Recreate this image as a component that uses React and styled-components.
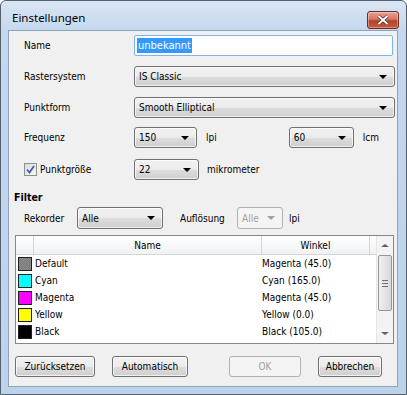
import React from 'react';
import styled, { createGlobalStyle, css } from 'styled-components';

const GlobalStyle = createGlobalStyle`
  html, body {
    margin: 0;
    padding: 0;
    background: #ffffff;
  }
  * {
    box-sizing: border-box;
  }
`;

const Window = styled.div`
  width: 407px;
  height: 395px;
  border: 1px solid #555f6e;
  border-radius: 6px 6px 0 0;
  background: linear-gradient(180deg, #d9e6f4 0px, #c4d8ee 30px, #bcd3eb 100%);
  padding: 0 8px 7px 7px;
  display: flex;
  flex-direction: column;
  font-family: 'DejaVu Sans Condensed', 'Liberation Sans', sans-serif;
  font-size: 10px;
  color: #000;
`;

const TitleBar = styled.div`
  height: 29px;
  display: flex;
  align-items: center;
  justify-content: space-between;
  padding-left: 4px;
`;

const Title = styled.span`
  font-family: 'Noto Sans', 'Open Sans', sans-serif;
  font-size: 11.5px;
  color: #000;
  margin-top: 3px;
`;

const CloseButton = styled.div`
  width: 32px;
  height: 18px;
  margin-top: 9px;
  margin-right: -1px;
  border: 1px solid #6b2b24;
  border-radius: 3px;
  background: linear-gradient(180deg, #e8a393 0%, #d47766 45%, #b8412c 55%, #c85a3f 100%);
  display: flex;
  align-items: center;
  justify-content: center;
  box-shadow: inset 0 0 0 1px rgba(255, 255, 255, 0.35);
`;

const Client = styled.div`
  flex: 1;
  background: #f0f0f0;
  border: 1px solid #8fa3ba;
  display: flex;
  flex-direction: column;
  padding: 4px 4px 0 5px;
`;

const Row = styled.div`
  display: flex;
  align-items: center;
  height: ${(p) => p.$h || 21}px;
  margin-top: ${(p) => p.$mt || 0}px;
  padding-left: ${(p) => (p.$indent ? 10 : 0)}px;
`;

const Label = styled.span`
  width: ${(p) => (p.$w ? `${p.$w}px` : 'auto')};
  flex-shrink: 0;
  margin-left: ${(p) => p.$ml || 0}px;
  white-space: nowrap;
`;

const TextInput = styled.div`
  width: 261px;
  height: 21px;
  border: 1px solid #7eb4ea;
  border-radius: 2px;
  background: #fff;
  display: flex;
  align-items: center;
  padding-left: 2px;
`;

const Selected = styled.span`
  background: #3399ff;
  color: #fff;
  line-height: 15px;
  padding: 0 1px;
  font-size: 11px;
`;

const ComboBox = styled.div`
  position: relative;
  width: ${(p) => p.$w}px;
  height: ${(p) => p.$h || 21}px;
  margin-left: ${(p) => p.$ml || 0}px;
  flex-shrink: 0;
  border: 1px solid #707070;
  border-radius: 3px;
  display: flex;
  align-items: center;
  padding-left: 4px;
  background: linear-gradient(180deg, #f2f2f2 0%, #ebebeb 50%, #dddddd 51%, #cfcfcf 100%);
  box-shadow: inset 0 0 0 1px rgba(255, 255, 255, 0.7);
  ${(p) =>
    p.$disabled &&
    css`
      border-color: #adb2b5;
      background: #f4f4f4;
      box-shadow: none;
      color: #a0a0a0;
    `}
`;

const Arrow = styled.span`
  position: absolute;
  right: 7px;
  top: 50%;
  margin-top: -2px;
  width: 0;
  height: 0;
  border-left: 4px solid transparent;
  border-right: 4px solid transparent;
  border-top: 4px solid ${(p) => (p.$disabled ? '#a0a0a0' : '#000')};
`;

const Unit = styled.span`
  margin-left: ${(p) => p.$ml || 9}px;
  white-space: nowrap;
`;

const CheckBox = styled.span`
  width: 13px;
  height: 13px;
  border: 1px solid #8e8f8f;
  background: linear-gradient(135deg, #dcdcdc 0%, #f6f6f6 100%);
  display: flex;
  align-items: center;
  justify-content: center;
  margin-right: 3px;
`;

const SectionTitle = styled.div`
  font-weight: bold;
  font-size: 10.5px;
  margin-top: 10px;
  line-height: 14px;
`;

const Combo = ({ w, h, ml, disabled, children }) => (
  <ComboBox $w={w} $h={h} $ml={ml} $disabled={disabled}>
    {children}
    <Arrow $disabled={disabled} />
  </ComboBox>
);

const ListBox = styled.div`
  margin-top: 6px;
  margin-left: 1px;
  width: 379px;
  height: 109px;
  border: 1px solid #828790;
  background: #fff;
  display: flex;
`;

const ListMain = styled.div`
  flex: 1;
  display: flex;
  flex-direction: column;
  overflow: hidden;
`;

const Header = styled.div`
  display: flex;
  height: 19px;
  background: linear-gradient(180deg, #ffffff 0%, #f7f8f9 50%, #f0f1f3 100%);
  border-bottom: 1px solid #d5d5d5;
  flex-shrink: 0;
`;

const HeaderCell = styled.div`
  width: ${(p) => (p.$w ? `${p.$w}px` : 'auto')};
  flex: ${(p) => (p.$w ? '0 0 auto' : '1')};
  border-right: ${(p) => (p.$last ? 'none' : '1px solid #d5d5d5')};
  display: flex;
  align-items: center;
  justify-content: center;
  padding-top: 1px;
`;

const ListRow = styled.div`
  display: flex;
  align-items: center;
  height: 17px;
`;

const Swatch = styled.span`
  width: 14px;
  height: 14px;
  margin-left: 2px;
  border: 1px solid #202020;
  background: ${(p) => p.$color};
  ${(p) =>
    p.$pattern &&
    css`
      background-color: #7a7a7a;
      background-image: linear-gradient(45deg, #8c8c8c 25%, transparent 25%, transparent 75%, #8c8c8c 75%),
        linear-gradient(45deg, #8c8c8c 25%, transparent 25%, transparent 75%, #8c8c8c 75%);
      background-size: 2px 2px;
      background-position: 0 0, 1px 1px;
    `}
`;

const CellName = styled.span`
  width: 228px;
  padding-left: 3px;
`;

const CellAngle = styled.span`
  padding-left: 2px;
  white-space: nowrap;
`;

const ScrollBar = styled.div`
  width: 17px;
  flex-shrink: 0;
  background: #f3f3f3;
  border-left: 1px solid #e6e6e6;
  display: flex;
  flex-direction: column;
  align-items: center;
`;

const ScrollArrow = styled.div`
  height: 19px;
  width: 100%;
  display: flex;
  align-items: center;
  justify-content: center;
  &::after {
    content: '';
    width: 0;
    height: 0;
    border-left: 4px solid transparent;
    border-right: 4px solid transparent;
    ${(p) => (p.$down ? 'border-top: 3px solid #606060;' : 'border-bottom: 3px solid #606060;')}
  }
`;

const Thumb = styled.div`
  width: 14px;
  height: 56px;
  border: 1px solid #969696;
  border-radius: 2px;
  background: linear-gradient(90deg, #f0f0f0 0%, #e4e4e4 50%, #d8d8d8 100%);
  display: flex;
  flex-direction: column;
  align-items: center;
  justify-content: center;
  gap: 2px;
`;

const Grip = styled.span`
  width: 6px;
  height: 1px;
  background: #707070;
`;

const ScrollSpace = styled.div`
  flex: 1;
`;

const ButtonBar = styled.div`
  display: flex;
  align-items: center;
  margin-top: 12px;
  margin-left: 1px;
`;

const Button = styled.div`
  width: ${(p) => p.$w}px;
  height: 21px;
  margin-left: ${(p) => p.$ml || 0}px;
  border: 1px solid #707070;
  border-radius: 3px;
  display: flex;
  align-items: center;
  justify-content: center;
  background: linear-gradient(180deg, #f2f2f2 0%, #ebebeb 50%, #dddddd 51%, #cfcfcf 100%);
  box-shadow: inset 0 0 0 1px rgba(255, 255, 255, 0.7);
  ${(p) =>
    p.$disabled &&
    css`
      border-color: #adb2b5;
      background: #f4f4f4;
      box-shadow: none;
      color: #a0a0a0;
    `}
`;

const inks = [
  { name: 'Default', angle: 'Magenta (45.0)', pattern: true },
  { name: 'Cyan', angle: 'Cyan (165.0)', color: '#00ffff' },
  { name: 'Magenta', angle: 'Magenta (45.0)', color: '#ff00ff' },
  { name: 'Yellow', angle: 'Yellow (0.0)', color: '#ffff00' },
  { name: 'Black', angle: 'Black (105.0)', color: '#000000' },
];

export default function App() {
  return (
    <>
      <GlobalStyle />
      <Window>
        <TitleBar>
          <Title>Einstellungen</Title>
          <CloseButton>
            <svg width="12" height="10" viewBox="0 0 12 10">
              <path d="M1.5 1 L10.5 9 M10.5 1 L1.5 9" stroke="#5a2a22" strokeWidth="3.4" />
              <path d="M1.5 1 L10.5 9 M10.5 1 L1.5 9" stroke="#ffffff" strokeWidth="2" />
            </svg>
          </CloseButton>
        </TitleBar>
        <Client>
          <Row $indent $h={21}>
            <Label $w={110}>Name</Label>
            <TextInput>
              <Selected>unbekannt</Selected>
            </TextInput>
          </Row>
          <Row $indent $mt={10}>
            <Label $w={110}>Rastersystem</Label>
            <Combo w={261}>IS Classic</Combo>
          </Row>
          <Row $indent $mt={10}>
            <Label $w={110}>Punktform</Label>
            <Combo w={261}>Smooth Elliptical</Combo>
          </Row>
          <Row $indent $mt={9}>
            <Label $w={110}>Frequenz</Label>
            <Combo w={63}>150</Combo>
            <Unit>lpi</Unit>
            <Combo w={65} ml={72}>60</Combo>
            <Unit>lcm</Unit>
          </Row>
          <Row $indent $mt={11}>
            <CheckBox>
              <svg width="9" height="9" viewBox="0 0 9 9">
                <path d="M1 4.5 L3.5 7.5 L8 1" stroke="#4060a8" strokeWidth="1.8" fill="none" />
              </svg>
            </CheckBox>
            <Label $w={94}>Punktgröße</Label>
            <Combo w={65}>22</Combo>
            <Unit $ml={8}>mikrometer</Unit>
          </Row>
          <SectionTitle>Filter</SectionTitle>
          <Row $indent $mt={3} $h={22}>
            <Label $w={53}>Rekorder</Label>
            <Combo w={86} h={22}>Alle</Combo>
            <Label $ml={17} $w={57}>Auflösung</Label>
            <Combo w={46} h={22} disabled>Alle</Combo>
            <Unit $ml={6}>lpi</Unit>
          </Row>
          <ListBox>
            <ListMain>
              <Header>
                <HeaderCell $w={18} />
                <HeaderCell $w={228}>Name</HeaderCell>
                <HeaderCell $w={108}>Winkel</HeaderCell>
                <HeaderCell $last />
              </Header>
              {inks.map((ink) => (
                <ListRow key={ink.name}>
                  <Swatch $color={ink.color} $pattern={ink.pattern} />
                  <CellName>{ink.name}</CellName>
                  <CellAngle>{ink.angle}</CellAngle>
                </ListRow>
              ))}
            </ListMain>
            <ScrollBar>
              <ScrollArrow />
              <Thumb>
                <Grip />
                <Grip />
                <Grip />
              </Thumb>
              <ScrollSpace />
              <ScrollArrow $down />
            </ScrollBar>
          </ListBox>
          <ButtonBar>
            <Button $w={80}>Zurücksetzen</Button>
            <Button $w={76} $ml={17}>Automatisch</Button>
            <Button $w={72} $ml={41} $disabled>OK</Button>
            <Button $w={64} $ml={17}>Abbrechen</Button>
          </ButtonBar>
        </Client>
      </Window>
    </>
  );
}
